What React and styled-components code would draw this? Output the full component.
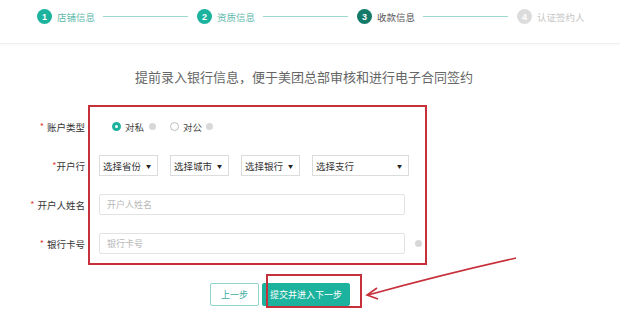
import styled, { createGlobalStyle } from "styled-components";

const GlobalStyle = createGlobalStyle`
  html, body {
    margin: 0;
    padding: 0;
    background: #fff;
  }
  body {
    font-family: "Noto Sans CJK SC", "Noto Sans", sans-serif;
    color: #333;
  }
`;

const Page = styled.div`
  position: relative;
  width: 620px;
  height: 310px;
  overflow: hidden;
  background: #fff;
`;

const Steps = styled.div`
  display: flex;
  align-items: center;
  height: 33px;
  padding: 0 0 10px 37px;
  border-bottom: 1px solid #efefef;
  box-shadow: 0 1px 2px rgba(0, 0, 0, 0.03);
`;

const Step = styled.div`
  display: flex;
  align-items: center;
  width: 160px;
  flex: none;
`;

const Circle = styled.span`
  width: 15px;
  height: 15px;
  border-radius: 50%;
  flex: none;
  background: ${(p) => (p.$state === "active" ? "#137a69" : p.$state === "done" ? "#1cb39e" : "#dcdcdc")};
  color: #fff;
  font-family: "Liberation Sans", sans-serif;
  font-size: 9px;
  font-weight: bold;
  display: flex;
  align-items: center;
  justify-content: center;
`;

const StepLabel = styled.span`
  margin-left: 5px;
  font-size: 9.5px;
  white-space: nowrap;
  color: ${(p) => (p.$state === "active" ? "#555" : p.$state === "done" ? "#5fb9ac" : "#c4c4c4")};
`;

const StepLine = styled.span`
  width: 85px;
  height: 1px;
  margin-left: 8px;
  background: #9fd6ce;
`;

const Title = styled.div`
  margin-top: 24px;
  padding-right: 12px;
  text-align: center;
  font-size: 13px;
  color: #666;
  line-height: 18px;
`;

const Form = styled.div`
  display: flex;
  margin-top: 19px;
`;

const Labels = styled.div`
  width: 88px;
  padding-top: 2px;
  display: flex;
  flex-direction: column;
`;

const Label = styled.div`
  height: 39px;
  display: flex;
  align-items: center;
  justify-content: flex-end;
  padding-right: 3px;
  font-size: 9.5px;
  color: #333;
  white-space: nowrap;

  &::before {
    content: "*";
    color: #e0403a;
    margin-right: ${(p) => (p.$tight ? "0" : "3px")};
    font-size: 9px;
  }
`;

const Highlight = styled.div`
  width: 335px;
  border: 2px solid #c6303a;
  display: flex;
  flex-direction: column;
`;

const Row = styled.div`
  height: 39px;
  display: flex;
  align-items: center;
  padding-left: 9px;
  gap: ${(p) => p.$gap || 0}px;
`;

const RadioGroup = styled.div`
  display: flex;
  align-items: center;
  margin-left: 13px;
`;

const RadioItem = styled.label`
  display: flex;
  align-items: center;
  margin-right: 14px;
  font-size: 9.5px;
  color: #444;
`;

const RadioDot = styled.span`
  width: 9px;
  height: 9px;
  border-radius: 50%;
  box-sizing: border-box;
  border: ${(p) => (p.$on ? "3px solid #1cb39e" : "1px solid #bdbdbd")};
  margin-right: 4px;
`;

const Info = styled.span`
  display: inline-block;
  width: 7px;
  height: 7px;
  border-radius: 50%;
  background: #d8d8d8;
  margin-left: ${(p) => p.$ml || 5}px;
  flex: none;
`;

const Select = styled.div`
  width: ${(p) => p.$w}px;
  height: 21px;
  box-sizing: border-box;
  border: 1px solid #dcdcdc;
  display: flex;
  align-items: center;
  justify-content: space-between;
  padding: 0 6px 0 3px;
  font-size: 9.5px;
  color: #333;
  flex: none;

  &::after {
    content: "▼";
    font-size: 5px;
    color: #222;
  }
`;

const Input = styled.div`
  width: 306px;
  height: 21px;
  box-sizing: border-box;
  border: 1px solid #e3e3e3;
  border-radius: 2px;
  display: flex;
  align-items: center;
  padding-left: 7px;
  font-size: 9px;
  color: #b8b8b8;
  flex: none;
`;

const Actions = styled.div`
  display: flex;
  align-items: flex-start;
  gap: 3px;
  margin-top: 18px;
  padding-left: 210px;
`;

const Button = styled.button`
  display: block;
  height: 23px;
  padding: 0;
  width: ${(p) => p.$w}px;
  border-radius: 2px;
  font-family: "Noto Sans CJK SC", sans-serif;
  font-size: 9px;
  cursor: pointer;
  border: 1px solid ${(p) => (p.$primary ? "#1cb39e" : "#8fd5cb")};
  background: ${(p) => (p.$primary ? "#1cb39e" : "#fff")};
  color: ${(p) => (p.$primary ? "#fff" : "#3cae9e")};
`;

const Marked = styled.div`
  position: relative;
`;

const MarkBox = styled.div`
  position: absolute;
  left: 4px;
  top: -9px;
  width: 96px;
  height: 34px;
  box-sizing: border-box;
  border: 2px solid #c6303a;
  pointer-events: none;
`;

const Arrow = styled.svg`
  position: absolute;
  left: 0;
  top: 0;
  pointer-events: none;
`;

const steps = [
  { n: 1, text: "店铺信息", state: "done" },
  { n: 2, text: "资质信息", state: "done" },
  { n: 3, text: "收款信息", state: "active" },
  { n: 4, text: "认证签约人", state: "todo" },
];

export default function App() {
  return (
    <Page>
      <GlobalStyle />
      <Steps>
        {steps.map((s, i) => (
          <Step key={s.n}>
            <Circle $state={s.state}>{s.n}</Circle>
            <StepLabel $state={s.state}>{s.text}</StepLabel>
            {i < steps.length - 1 && <StepLine />}
          </Step>
        ))}
      </Steps>

      <Title>提前录入银行信息，便于美团总部审核和进行电子合同签约</Title>

      <Form>
        <Labels>
          <Label>账户类型</Label>
          <Label $tight>开户行</Label>
          <Label>开户人姓名</Label>
          <Label>银行卡号</Label>
        </Labels>
        <Highlight>
          <Row>
            <RadioGroup>
              <RadioItem>
                <RadioDot $on />
                对私
                <Info />
              </RadioItem>
              <RadioItem>
                <RadioDot />
                对公
                <Info $ml={4} />
              </RadioItem>
            </RadioGroup>
          </Row>
          <Row $gap={12}>
            <Select $w={59}>选择省份</Select>
            <Select $w={59}>选择城市</Select>
            <Select $w={59}>选择银行</Select>
            <Select $w={97}>选择支行</Select>
          </Row>
          <Row>
            <Input>开户人姓名</Input>
          </Row>
          <Row>
            <Input>银行卡号</Input>
            <Info $ml={10} />
          </Row>
        </Highlight>
      </Form>

      <Actions>
        <Button $w={49}>上一步</Button>
        <Marked>
          <Button $primary $w={88}>提交并进入下一步</Button>
          <MarkBox />
        </Marked>
      </Actions>

      <Arrow width="620" height="310" viewBox="0 0 620 310">
        <path d="M516 258 Q440 275 368 295" fill="none" stroke="#c6303a" strokeWidth="1.6" />
        <path d="M377 288 L367 295 L378 299" fill="none" stroke="#c6303a" strokeWidth="1.6" />
      </Arrow>
    </Page>
  );
}
